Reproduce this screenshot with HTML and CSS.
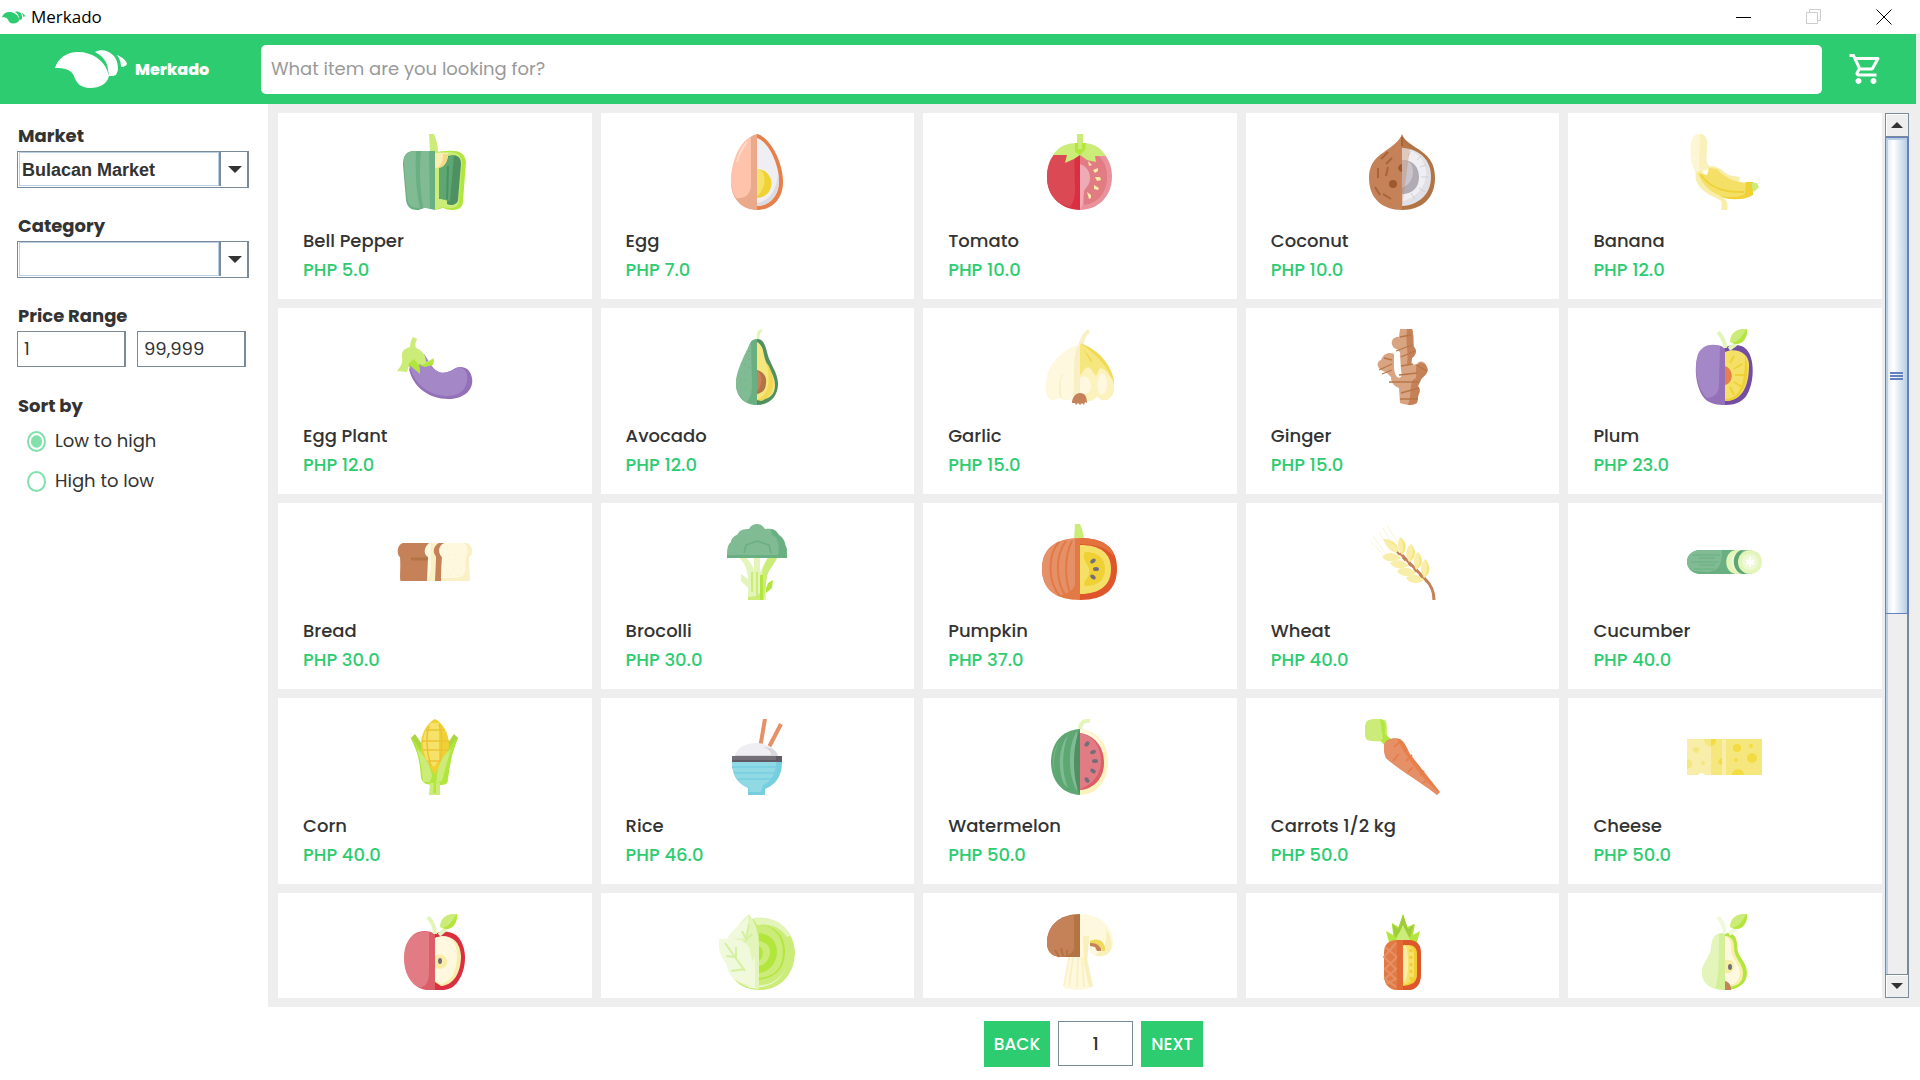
FILE: index.html
```html
<!DOCTYPE html>
<html lang="en">
<head>
<meta charset="utf-8">
<title>Merkado</title>
<link rel="stylesheet" href="styles.css">
</head>
<body>
<svg class="defs" aria-hidden="true">
  <symbol id="bird" viewBox="0 0 72 38">
    <path d="M0 18C3 8 12 2 23 2c14 0 25 8 29 18l2 6c-2 8-9 12-19 12-9 0-14-5-16-12C16 19 9 18 0 18Z"/>
    <path d="M40 2c5-3 13-2 18 3 4 4 5 9 5 15l-2 5c-2 1-4 1-7 1l-1-6C53 13 48 6 40 2Z"/>
    <path d="M62 5c5 2 9 5 10 9-1 2-3 3-6 3 0-4-1-8-4-12Z"/>
  </symbol>
</svg>

<div class="titlebar">
  <svg class="titlebar-icon"><use href="#bird"/></svg>
  <span class="titlebar-name">Merkado</span>
  <button class="win-btn" aria-label="Minimize"><svg viewBox="0 0 16 16"><path d="M0 8.5h15"/></svg></button>
  <button class="win-btn win-btn-off" aria-label="Restore" disabled><svg viewBox="0 0 16 16"><path d="M.5 3.500h11v11H.5zM3.500 3V.5h11v11H12"/></svg></button>
  <button class="win-btn" aria-label="Close"><svg viewBox="0 0 16 16"><path d="M.5.5l15 15M15.500.5l-15 15"/></svg></button>
</div>

<header class="header">
  <a class="brand" href="#"><svg class="brand-logo"><use href="#bird"/></svg><span>Merkado</span></a>
  <input class="search" type="text" placeholder="What item are you looking for?" aria-label="Search items">
  <button class="cart" aria-label="Cart"><svg viewBox="0 0 24 24"><path d="M15.550 13c.75 0 1.410-.41 1.750-1.030l3.580-6.490A.996.996 0 0 0 20.010 4H5.210l-.94-2H1v2h2l3.600 7.590-1.350 2.440C4.520 15.370 5.480 17 7 17h12v-2H7l1.100-2h7.450zM6.160 6h12.150l-2.760 5H8.530L6.160 6zM7 18c-1.100 0-1.990.9-1.990 2S5.900 22 7 22s2-.9 2-2-.9-2-2-2zm10 0c-1.100 0-1.990.9-1.990 2s.89 2 1.990 2 2-.9 2-2-.9-2-2-2z"/></svg></button>
</header>

<div class="layout">
  <aside class="sidebar">
    <div class="field">
      <label for="market">Market</label>
      <div class="combo"><select id="market"><option>Bulacan Market</option></select></div>
    </div>
    <div class="field">
      <label for="category">Category</label>
      <div class="combo"><select id="category"><option></option></select></div>
    </div>
    <fieldset class="field">
      <legend>Price Range</legend>
      <div class="range">
        <input type="text" value="1" aria-label="Lowest price">
        <input type="text" value="99,999" aria-label="Highest price">
      </div>
    </fieldset>
    <fieldset class="field">
      <legend>Sort by</legend>
      <label class="radio"><input type="radio" name="sort" checked>Low to high</label>
      <label class="radio"><input type="radio" name="sort">High to low</label>
    </fieldset>
  </aside>

  <main class="main">
    <div class="viewport">
      <section class="products">
        <article class="card">
          <svg viewBox="0 0 76 76">
            <path fill="#cbec78" d="M32 0h5c2 5 4 11 4 18h-8Z"/>
            <path fill="#b2e63c" d="M38 18c4 0 6-1 12-1 10-1 18 1 19 11l-3 39c0 6-4 9-10 9-5 0-7-1-10-2l-8 2Z"/>
            <path fill="#cbec78" d="M38 18h12c9 0 14 2 15 10l-3 38c0 5-3 8-8 8-6 0-10-2-16 2Z"/>
            <path fill="#4f9062" d="M51 22c8-2 13 0 13 8l-3 36c-1 5-7 6-11 4Z"/>
            <path fill="#5da772" d="M42 33c4-2 6-11 15-12l-4 46c-4 0-6-2-11-2Z"/>
            <path fill="#4f9062" d="M50 32h2l-1 34-2-1Z"/>
            <path fill="#f8efb0" d="M38 19h13c0 8-4 15-13 15Z"/><path fill="#f5da86" d="M46 20h5c0 8-4 14-10 14 4-4 5-8 5-14Z"/>
            <path fill="#69af81" d="M17 17c-8 0-11 5-11 14l3 35c1 7 5 10 11 10 4 0 5-2 9-2l9 2V17Z"/>
            <path fill="#80bb93" d="M17 17c-7 0-11 5-10 14l3 33c1 7 4 10 13 10-4-18-5-38-4-57ZM24 17h8l1 57h-7c-3-20-4-38-2-57Z"/>
          </svg>
          <h2>Bell Pepper</h2><p>PHP 5.0</p>
        </article>
        <article class="card">
          <svg viewBox="0 0 76 76">
            <path fill="#e77f4b" d="M38 0c13 3 26 28 26 48 0 18-12 28-26 28Z"/>
            <path fill="#efeff3" d="M38 4c12 4 22 26 22 44 0 14-10 24-22 24Z"/>
            <path fill="#dcdbe2" d="M59 38c4 20-6 34-21 34v-3c12-2 20-12 21-31Z"/>
            <path fill="#f0d234" d="M38 35a14 14 0 0 1 0 29Z"/><path fill="#f6e169" d="M38 35c10 0 10 20 0 27Z"/>
            <path fill="#eaa98a" d="M38 0C24 3 12 28 12 48c0 18 12 28 26 28Z"/>
            <path fill="#ffc2ab" d="M32 3C20 8 12 29 12 46c0 8 2 13 5 18 9 1 15-4 15-13Z"/>
            <path fill="none" stroke="#ffd8c9" stroke-width="2" d="M18 28c2-8 5-14 10-20"/>
          </svg>
          <h2>Egg</h2><p>PHP 7.0</p>
        </article>
        <article class="card">
          <svg viewBox="0 0 76 76">
            <path fill="#e9929b" d="M38 12c20-2 32 12 32 31S56 76 38 76Z"/>
            <path fill="#e27c84" d="M38 16c17 0 27 10 27 27S55 69 42 71l-4-28Z"/>
            <path fill="#eeaab5" d="M38 30c6 2 10 7 10 14 0 8-5 9-6 14l-1 12-3 6Z"/>
            <path fill="#f9eda5" d="M46 27l4 4-3 1zM51 36l5-2v3l-3 2zM53 43h5l1 3-4 1zM52 51l5 3-1 2-4-1zM45 58l4 3v3l-2 1z"/>
            <path fill="#d92f40" d="M38 12C18 10 5 24 5 43s14 33 33 33Z"/>
            <path fill="#db4a54" d="M32 12C14 12 5 25 5 43c0 17 9 27 23 30 4-5 5-11 5-17Z"/>
            <path fill="#cbec78" d="M11 21C16 13 24 9 35 9V0h6v9c11 0 18 5 23 13h-11l1 6-9-2-7-5-6 4-9 4 2-8Z"/>
            <path fill="#b2e63c" d="M33 9h3v6h4V9h4l-1 7-5 5-5-3Z"/>
          </svg>
          <h2>Tomato</h2><p>PHP 10.0</p>
        </article>
        <article class="card">
          <svg viewBox="0 0 76 76">
            <path fill="#b37444" d="M37 0c2 7 12 12 19 17 10 7 14 15 14 27 0 20-13 32-33 32Z"/>
            <path fill="#e1e0e6" d="M37 14c18 1 29 12 29 29S54 71 37 72Z"/>
            <path fill="#efeff3" d="M37 14c14 2 24 12 24 26 0 13-11 25-24 27Z"/>
            <path fill="#b0abb4" d="M37 26c11 0 17 7 17 17s-6 17-17 17Z"/><path fill="#c9c5cc" d="M37 26c8 0 11 5 11 12s-4 13-11 16Z"/>
            <path stroke="#d1cfd7" stroke-width="1" d="M43 22l3-5M52 26l4-4M55 33l6-2M56 43h7M54 54l6 4M46 59l4 6"/>
            <path fill="#c58158" d="M37 0c-2 7-11 13-18 18C8 25 4 33 4 44c0 20 13 32 33 32Z"/>
            <path fill="#c58158" d="M37 4l8 10-8 60Z" opacity=".35"/>
            <path fill="none" stroke="#a5653a" stroke-width="2" d="M16 25l7-7M21 30l6-6M13 44V34M21 42l2-9M10 53l5 8M18 60l8 5M37 12V3"/>
            <circle cx="28" cy="50" r="4" fill="#9b592d"/><path fill="#9b592d" d="M37 30v8c-5-1-5-7 0-8Z"/>
          </svg>
          <h2>Coconut</h2><p>PHP 10.0</p>
        </article>
        <article class="card">
          <svg viewBox="0 0 76 76">
            <path fill="#fdf6d5" d="M9 40C2 28 1 3 10 0c8-1 11 7 10 15l-1 13 5 7Z"/>
            <path fill="#f9f0bb" d="M13 0c7 0 8 7 7 17-1 8-1 12 3 16l-9 4c-4-8-1-19-1-37Z"/>
            <path fill="#f8eeaa" d="M20 33c7-2 13 1 17 5 5 4 10 4 16 5l-1 7H37ZM9 38c-3 12 8 21 22 27 5 2 4 6 3 11h6c2-7-1-10-5-14L14 36Z"/>
            <path fill="#f5e067" d="M11 39c5 15 20 26 39 26 9 0 15-3 16-6l1-11c-13 2-26-1-37-13l-8-1-2 7Z"/>
            <path fill="#efd136" d="M59 48h7v13c-11 6-25 5-34 1 12 2 21 1 26-2ZM14 40c10 13 23 18 43 17v2C37 60 22 54 13 41Z"/>
            <path fill="#cbec78" d="M65 49h5l2 4-5 5-2-4Z"/>
          </svg>
          <h2>Banana</h2><p>PHP 12.0</p>
        </article>

        <article class="card">
          <svg viewBox="0 0 76 76">
            <path fill="#9470b8" d="M12 40c4 18 20 30 39 30 16 0 26-9 24-21-2-11-11-13-18-9-10 6-17 5-23-4l-7-11Z"/>
            <path fill="#a487c7" d="M12 36c4 16 17 31 39 31 12 0 18-7 19-15s-1-12-8-14l-5 2c-9 6-17 5-23-4l-7-10Z"/>
            <path fill="#cbec78" d="M16 8l4 2c-2 4-2 6-1 9 6 2 10 7 10 14l8-4-1 5-8 3-6-2 1 9-7-6-3-4-3 9-10-1 3-4c3-4 2-8 2-12 0-5 4-7 8-8 0-4 1-7 3-10Z"/>
            <path fill="#b2e63c" d="M17 30c3 5 7 8 12 4l8-4-1 6-8 2-6-2 1 9-7-6-5-4Z"/>
          </svg>
          <h2>Egg Plant</h2><p>PHP 12.0</p>
        </article>
        <article class="card">
          <svg viewBox="0 0 76 76">
            <path fill="none" stroke="#e3f5ba" stroke-width="3" d="M43 1c-4 2-4 4-4 9"/>
            <path fill="#4f9062" d="M38 10c6 0 8 5 10 13 2 11 11 20 11 32 0 13-9 21-21 21Z"/>
            <path fill="#f6e67e" d="M38 13c4 2 6 6 7 13 2 12 11 19 11 30s-7 15-18 15Z"/>
            <path fill="#f1d957" d="M48 34c8 12 11 32-6 38l-4-1c10-5 14-14 10-37Z"/>
            <path fill="#b37444" d="M38 41c7 2 10 7 9 13 0 7-4 10-9 11Z"/><path fill="#c58158" d="M38 41c6 4 6 14 0 22Z"/>
            <path fill="#69af81" d="M38 10c-7 0-7 5-10 13-3 12-11 20-11 32 0 13 9 21 21 21Z"/>
            <path fill="#80bb93" d="M32 13c-4 8-15 28-15 41 0 10 4 15 11 19 4-5 5-10 5-18Z"/>
            <path stroke="#69af81" stroke-width="1" stroke-dasharray="1 7" d="M22 50v20M26 35v30M30 22v18"/>
          </svg>
          <h2>Avocado</h2><p>PHP 12.0</p>
        </article>
        <article class="card">
          <svg viewBox="0 0 76 76">
            <path fill="#f9f1c5" d="M46 0l2 3c-5 5-6 9-6 14l-8 5c3-6 4-17 12-22Z"/>
            <path fill="#fef8df" d="M38 15C17 22 4 38 4 56c-1 14 5 18 13 13 8 4 12 3 16-2l5-3Z"/>
            <path fill="#f8efc5" d="M38 15c-6 7-6 14-6 45l-1 7h7ZM21 45c-3 7-3 17-1 24h-2c-2-8-1-18 2-24Z"/>
            <path fill="#f6e67e" d="M38 15c18 5 30 20 34 36v10L38 54Z"/>
            <path fill="#f1d957" d="M38 14c20 7 30 22 34 37l-3-3C63 34 55 27 38 14ZM41 19l9 12-1 3Z"/>
            <path fill="#fbf2bd" d="M38 47c5-9 9-12 12-5l4 5 4-8c6 1 10 7 12 12 5 7 1 18-5 20-6 1-8-1-9-4-6 7-13 6-18 2Z"/>
            <path fill="#fef8e0" d="M38 49c6-4 10 0 11 8 0 6-4 9-11 9ZM59 44c8 2 8 19 1 22-5-1-6-14-1-22Z"/>
            <path fill="#c58158" d="M30 74c0-6 4-10 8-10 5 0 7 4 7 10l-2-1-1 3-2-2-2 2-2-2-2 2-1-2Z"/>
          </svg>
          <h2>Garlic</h2><p>PHP 15.0</p>
        </article>
        <article class="card">
          <svg viewBox="0 0 76 76">
            <path fill="#d9a482" d="M35 0h12c3 8 0 14 2 18 4 4 1 9-2 11l-1 7 6-1c2-5 9-2 9 2 5 5-1 10-5 13l-3 7c4 5 0 7 0 12l-1 5c-5 3-12 2-17 0l-1-15c-5-2-8-5-8-11l-5-5c-9-2-11-10-5-12 3-7 8-8 13-6v9c0 5 0 10 3 14 3 2 6 0 4-7l-1-15c1-3-2-6-6-7-5-6-1-12 5-11Z"/>
            <path fill="#c58158" d="M42 0h5c2 7 1 13 2 18 4 4 1 9-2 11l-1 7-4-1c2-13-2-20 0-35ZM55 34c9 0 10 9 2 15l-4 8c4 6 0 7 0 12l-1 5c-4 2-7 2-9 2 5-12 0-24 8-27 1-5-1-8 1-13Z"/>
            <path fill="none" stroke="#b87546" stroke-width="1.300" d="M35 8l11-2M31 22l16-6M36 28l14-6M36 37l12-2M14 41l13-6M17 45l10-4M24 53h30M34 46l18-2M51 36l11 6M36 64l18-5M35 70h18M19 29l8 2"/>
          </svg>
          <h2>Ginger</h2><p>PHP 15.0</p>
        </article>
        <article class="card">
          <svg viewBox="0 0 76 76">
            <path fill="#734da1" d="M38 19c7-5 17-3 21 1 11 10 8 45-5 52-5 3-10 4-16 4Z"/>
            <path fill="#f5e067" d="M38 23c11-5 24 1 24 13 0 18-5 36-24 36Z"/>
            <path fill="#efd136" d="M58 26c7 17 0 47-20 46v-2c17 0 20-20 20-44Z"/>
            <path stroke="#efd136" stroke-width="2" d="M43 34l4-7M47 40l8-5M48 46h9M47 53l8 5M43 58l4 8"/>
            <path fill="#e77f4b" d="M38 37c9 3 9 17 0 19Z"/>
            <path fill="#9470b8" d="M38 19c-7-5-17-3-21 0C5 27 7 58 18 70c5 5 13 6 20 6Z"/>
            <path fill="#a487c7" d="M33 17c-10-3-18 0-22 8-4 11-2 34 9 44 9-1 12-6 12-14Z"/>
            <path fill="none" stroke="#e3f5ba" stroke-width="4" d="M31 3c4 5 7 9 7 16M49 15l-7 5"/>
            <path fill="#cbec78" d="M43 13C43 4 50-1 60 0c1 9-7 18-17 13Z"/><path fill="#b2e63c" d="M60 0c1 10-6 18-15 14C54 12 55 6 60 0Z"/>
          </svg>
          <h2>Plum</h2><p>PHP 23.0</p>
        </article>

        <article class="card">
          <svg viewBox="0 0 76 76">
            <path fill="#c58158" d="M6 19h37l3 14-1 24H4c-2 0 0-12-1-24C0 32-1 21 6 19Z"/>
            <path stroke="#b37444" stroke-width="3" d="M14 35h17"/>
            <path fill="#fef8df" d="M32 19h8l-2 4c-4 4 0 7 0 10l-1 24h-7l1-24c-5-3-4-10 1-14Z"/><path fill="#f9f1c5" d="M38 19h4l-4 6c-3 4 2 6 1 10l-1 22h-7l3-11V20Z"/>
            <path fill="#c58158" d="M42 19h5l-2 38h-6l1-24c-5-4-4-11 2-14Z"/>
            <path fill="#f9f1c5" d="M48 19h21c7 1 8 12 3 14l1 24H44l1-24c-4-4-4-12 3-14Z"/>
            <path fill="#fef8df" d="M48 19h18c5 1 5 10 3 14v12c-1 6-5 9-11 9H44l1-21c-4-4-4-12 3-14Z"/>
            <path stroke="#f9f1c5" stroke-width="1" stroke-dasharray="1 6" d="M49 45h18M51 31h15M53 51h12"/>
          </svg>
          <h2>Bread</h2><p>PHP 30.0</p>
        </article>
        <article class="card">
          <svg viewBox="0 0 76 76">
            <path fill="#e3f5ba" d="M18 32h8c4 4 7 9 9 14V32h6v16c3-6 6-12 10-16h4L47 53v23H29V64l-7-7v-7l7 5c0-9-4-18-11-23Z"/>
            <path fill="#cbec78" d="M50 32h9c-3 8-9 13-11 20l-3 24H29v-3l8-1V48h2v23l4-4c-2-13 0-25 7-35Z"/>
            <path fill="#b2e63c" d="M41 51h3v25h-3ZM47 64l2-5 5-3-1 8-6 5Z"/>
            <path stroke="#cbec78" stroke-width="2" d="M33 48v20"/>
            <path fill="#80bb93" d="M8 33c0-6 0-12 4-15 0-4 4-6 7-8 1-4 6-5 11-5 3-6 12-7 16 0 5-1 11 0 13 5 5 3 7 7 7 11 3 3 2 8 2 13Z"/>
            <path fill="#69af81" d="M52 5c5 1 7 4 8 7 5 3 6 7 7 11l1 11H8v-3h51c2-9 0-13-2-18-4-1-5-4-5-8Z"/>
            <path fill="none" stroke="#69af81" stroke-width="1.500" d="M25 29l2-8 11-4 12 4 2 8"/>
          </svg>
          <h2>Brocolli</h2><p>PHP 30.0</p>
        </article>
        <article class="card">
          <svg viewBox="0 0 76 76">
            <path fill="#cbec78" d="M33 0h5c2 5 4 10 4 16H32Z"/>
            <path fill="#df552c" d="M38 14c26 0 37 11 37 31S63 76 38 76Z"/><path fill="#e2733d" d="M38 14c23 0 32 9 34 19-7-10-18-12-34-13Z"/>
            <path fill="#f5e067" d="M38 21c20 0 31 8 31 24S58 70 38 70Z"/>
            <path fill="#efd136" d="M43 28c13 0 20 6 20 17s-7 17-20 17c-3-6 6-8 4-17-1-5-8-10-4-17Z"/>
            <g fill="#746e79"><ellipse cx="51" cy="37" rx="3" ry="2" transform="rotate(-40 51 37)"/><ellipse cx="54" cy="45" rx="3" ry="2"/><ellipse cx="51" cy="53" rx="3" ry="2" transform="rotate(40 51 53)"/></g>
            <path fill="#e27a45" d="M38 14C13 14 0 25 0 45s13 31 38 31Z"/>
            <path fill="#e69068" d="M27 15C9 19 0 27 0 45c0 13 6 22 16 27 8-2 16-5 17-12V15Z"/>
            <path fill="none" stroke="#e27a45" stroke-width="2" d="M17 18C6 30 5 57 18 72M24 17c-11 14-11 41 1 57M30 17c-8 15-8 43 1 58"/>
          </svg>
          <h2>Pumpkin</h2><p>PHP 37.0</p>
        </article>
        <article class="card">
          <svg viewBox="0 0 76 76">
            <path stroke="#fdf5d2" stroke-width="1" d="M22 1l16 27M18 4l16 28M14 8l16 27M8 12l18 25M6 18l18 19"/>
            <path fill="none" stroke="#c58158" stroke-width="3" d="M69 76c0-9-3-15-8-20L35 29"/>
            <path fill="#f8eeaa" d="M34 30c-8-2-13-7-16-15 10-1 17 6 16 15ZM37 31c-5-7-5-13-2-18 6 4 8 12 2 18ZM44 38c-4-7-4-14 2-18 6 7 5 14-2 18ZM51 46c-3-7-3-14 2-18 6 7 5 14-2 18ZM59 54c-4-7-4-13 1-19 6 7 6 14-1 19ZM36 34c-9 5-15 4-19-1 5-6 13-5 19 1ZM44 42c-9 4-15 3-19-3 6-5 14-3 19 3ZM51 49c-8 5-15 4-19-2 6-5 13-4 19 2ZM59 56c-7 5-14 4-18-2 6-5 13-4 18 2Z"/>
            <path fill="#f6e67e" d="M37 31c2-7 1-13-2-18 6 4 8 12 2 18ZM44 38c4-6 5-12 2-18 6 7 5 14-2 18ZM51 46c4-6 5-12 2-18 6 7 5 14-2 18ZM59 54c4-6 4-13 1-19 6 7 6 14-1 19ZM34 30c0-8-6-11-12-13 7 0 12 6 12 13Z"/>
            <path stroke="#c58158" stroke-width="2" stroke-dasharray="4 4" d="M32 28l30 30"/>
          </svg>
          <h2>Wheat</h2><p>PHP 40.0</p>
        </article>
        <article class="card">
          <svg viewBox="0 0 76 76">
            <path fill="#69af81" d="M12 26h36v24H12C-4 48-4 28 12 26Z"/><path fill="#80bb93" d="M12 26h23c0 16-4 22-16 22L8 47C-4 44-3 28 12 26Z"/>
            <path stroke="#69af81" stroke-width="1" d="M5 31h28M4 38h28M7 45h20M12 34h16M12 41h16"/>
            <path fill="#e3f5ba" d="M49 26h9l-4 24h-5c-13-1-13-23 0-24Z"/><path fill="#f1f9dc" d="M50 29c-7 2-7 16 0 18l4-4V30Z"/>
            <path fill="#5da772" d="M55 26h10v24H55c-11-3-11-22 0-24Z"/><path fill="#80bb93" d="M56 26h7v3h-9Z"/>
            <circle cx="63" cy="38" r="12" fill="#e3f5ba"/><circle cx="63" cy="38" r="8" fill="#eff8d6"/>
            <path stroke="#fff" stroke-width="2" d="M63 33v10M59 36l8 4M67 36l-8 4"/>
          </svg>
          <h2>Cucumber</h2><p>PHP 40.0</p>
        </article>

        <article class="card">
          <svg viewBox="0 0 76 76">
            <path fill="#aad640" d="M14 19l4-4 9 13-5 10ZM61 19l-4-4-9 13 6 10Z"/>
            <path fill="#efd136" d="M38 0c8 4 14 15 14 25 0 17-8 27-14 34-6-8-14-17-14-34C24 15 30 4 38 0Z"/>
            <path fill="#f6e169" d="M34 4h8v37l-5 7-8-8c-5-14-4-26 5-36Z"/>
            <path fill="none" stroke="#ecc233" stroke-width="1.500" d="M29 11h18M25 22h27M26 31h25M31 42h14M32 7c-3 9-3 25 2 40M42 5c4 9 3 25 1 42"/>
            <path fill="#b2e63c" d="M13 18c5 4 11 12 15 21l10 17 8-15 8-15 7-8c-5 8-9 34-10 43-1 5-3 5-13 5s-12-2-14-7C23 43 20 28 13 18Z"/>
            <path fill="#cbec78" d="M20 30c8 7 13 16 15 27l-2 6h-7c-1-15-3-23-6-33ZM54 30c-9 7-13 16-14 27l-1 7c5 0 7-3 8-10ZM34 64h9v12H32l1-12Z"/><path fill="#b2e63c" d="M37 64h2v10h-3Z"/>
          </svg>
          <h2>Corn</h2><p>PHP 40.0</p>
        </article>
        <article class="card">
          <svg viewBox="0 0 76 76">
            <path fill="none" stroke="#e69068" stroke-width="4" d="M46 0l-5 29M62 5L48 32"/>
            <path fill="#efeff3" d="M16 38c1-18 40-19 43 0Z"/><path fill="#d8d7de" d="M44 28c9 0 14 4 15 9H16v-1h36c0-4-3-6-8-8Z"/>
            <path fill="#746e79" d="M13 37h50v6H13Z"/><path fill="#5f5a64" d="M57 37h6v6H13v-2h44Z"/>
            <path fill="#76cfde" d="M13 43h50c0 13-5 22-17 27v6H29v-7c-11-5-16-13-16-26Z"/>
            <path fill="#92d9e6" d="M13 43h44c0 13-6 20-13 23l-2 7H30v-4c-11-5-17-13-17-26Z"/>
            <path stroke="#76cfde" stroke-width="1.500" d="M13 48h44M15 54h41M19 60h34"/>
          </svg>
          <h2>Rice</h2><p>PHP 46.0</p>
        </article>
        <article class="card">
          <svg viewBox="0 0 76 76">
            <path fill="none" stroke="#e3f5ba" stroke-width="4" d="M48 2c-6-1-10 2-10 9"/>
            <path fill="#fbf2bd" d="M38 10c17 2 28 14 28 33S54 76 38 76Z"/>
            <path fill="#fef8df" d="M38 10c13 3 22 10 24 25-6-11-13-20-24-21Z"/>
            <path fill="#db5d68" d="M38 14c14 2 24 13 24 30 0 15-10 26-24 27Z"/><path fill="#e27c84" d="M38 14c14 3 21 14 21 28S50 66 38 70Z"/>
            <g fill="#746e79"><ellipse cx="45" cy="25" rx="3" ry="2" transform="rotate(-50 45 25)"/><ellipse cx="51" cy="33" rx="3" ry="2" transform="rotate(-25 51 33)"/><ellipse cx="53" cy="42" rx="3" ry="2"/><ellipse cx="51" cy="52" rx="3" ry="2" transform="rotate(30 51 52)"/><ellipse cx="45" cy="61" rx="3" ry="2" transform="rotate(55 45 61)"/></g>
            <path fill="#5da772" d="M38 10C20 11 9 24 9 43s11 32 29 33Z"/>
            <path fill="#80bb93" d="M26 16c-9 11-11 34-4 49l4 4c-7-16-6-38 0-53ZM35 12c-10 16-9 44 0 60V12ZM18 22c-6 8-7 23-5 32-3-11-2-24 5-32Z"/>
            <path fill="#4f9062" d="M38 10c-5 11-6 23-6 33s1 22 6 33Z"/>
          </svg>
          <h2>Watermelon</h2><p>PHP 50.0</p>
        </article>
        <article class="card">
          <svg viewBox="0 0 76 76">
            <path fill="#cbec78" d="M2 2C6-1 15 0 20 1c3 3 1 12 3 18l-3 4C13 22 4 23 1 20-1 15-1 6 2 2Z"/><path fill="#b2e63c" d="M15 0c6 1 6 7 5 15l6 5-6 7-4-5 2-3Z"/>
            <path fill="#e77f4b" d="M19 26c1-5 9-8 16-6 5 3 7 9 10 15l30 38-3 3C60 66 30 48 21 39c-2-4-2-9-2-13Z"/>
            <path fill="#e69068" d="M19 26c2-4 7-7 13-6 10 19 24 38 41 53l-1 2C60 66 30 48 21 39c-2-4-2-9-2-13Z"/>
            <path stroke="#e77f4b" stroke-width="2" d="M29 28l7-6M28 42l6-7M41 42l6-6M43 53l5-5M55 56l4-4M58 64l3-2"/>
          </svg>
          <h2>Carrots 1/2 kg</h2><p>PHP 50.0</p>
        </article>
        <article class="card">
          <svg viewBox="0 0 76 76">
            <path fill="#f8eeaa" d="M0 20h39v36H18a4 4 0 0 0-7 0H0Z"/><path fill="#f6e67e" d="M24 20h11v36H24ZM39 20h36v36H39Z"/>
            <path fill="#f6e67e" d="M17 20h7v8c-4-1-7-4-7-8ZM0 40c7 1 7 9 0 10Z"/><circle cx="9" cy="31" r="3" fill="#f6e67e"/><circle cx="16" cy="44" r="2" fill="#f6e67e"/>
            <path fill="#f3dc42" d="M24 20h5c0 4-2 7-5 7ZM35 39v7c-5-1-5-6 0-7ZM45 56a6 6 0 0 1 12 0Z"/>
            <g fill="#f3dc42"><circle cx="50" cy="29" r="4"/><circle cx="64" cy="27" r="2"/><circle cx="65" cy="39" r="5"/><circle cx="49" cy="41" r="2"/></g>
          </svg>
          <h2>Cheese</h2><p>PHP 50.0</p>
        </article>

        <article class="card">
          <svg viewBox="0 0 76 76">
            <path fill="#d92f40" d="M38 20c6-4 15-3 21 1 12 10 12 35 0 49-4 5-11 7-21 6Z"/>
            <path fill="#f8eeaa" d="M38 24c12-5 25 0 26 18 0 16-7 29-20 30l-6-4Z"/><path fill="#fef8df" d="M38 24c11-5 22 0 22 17 0 16-6 28-17 29l-5-4Z"/>
            <path fill="#f9eda5" d="M38 42c6-4 12 0 12 6s-7 9-12 5Z"/><ellipse cx="43" cy="47" rx="2" ry="3" fill="#746e79"/>
            <path fill="#db5d68" d="M38 20c-6-4-16-4-22 1-12 12-11 36 1 49 5 5 11 7 21 6Z"/>
            <path fill="#e27c84" d="M32 18C15 16 7 28 7 44s7 26 16 30c7-2 9-8 9-15Z"/>
            <path fill="none" stroke="#e3f5ba" stroke-width="4" d="M31 3c4 5 7 9 7 17M49 15l-7 6"/>
            <path fill="#cbec78" d="M43 13C43 4 50-1 60 0c1 9-7 18-17 13Z"/><path fill="#b2e63c" d="M60 0c1 10-6 18-15 14C54 12 55 6 60 0Z"/>
          </svg>
        </article>
        <article class="card">
          <svg viewBox="0 0 76 76">
            <path fill="#cbec78" d="M33 5c22-5 42 9 43 34-1 24-17 37-35 37-15 0-23-6-28-14Z"/>
            <path fill="#e3f5ba" d="M34 4c15-2 30 3 38 18l-4 1C60 12 50 9 38 11ZM70 40c0 16-12 31-29 31l-6 3c22 0 34-15 35-34Z"/>
            <path fill="#b2e63c" d="M40 11c18 1 26 12 26 27S57 64 40 66Z"/><path fill="#cbec78" d="M40 11c16 1 24 12 24 27S56 63 40 64Z"/>
            <path fill="#b2e63c" d="M40 19c12 1 18 9 18 19s-7 20-18 21Z"/><path fill="#cbec78" d="M40 27c7 1 11 5 11 11s-4 13-11 14Z"/><path fill="#b2e63c" d="M40 32c5 2 5 12 0 15Z"/>
            <path fill="#e3f5ba" d="M30 0c5 7 10 15 10 38v37c-20-1-32-15-32-30C8 29 16 12 30 0Z"/>
            <path fill="#f1f9dc" d="M0 25c15-2 30 1 31 13l3 12-4 21C18 69 8 62 8 51 1 43-1 35 0 25ZM29 2c-3 6-16 12-21 23l16-1 5-9ZM36 42v32h-6c0-14 2-24 6-32Z"/>
            <path fill="none" stroke="#d5f0a0" stroke-width="2" d="M6 29l20 28M7 42l9 1M17 33v12M12 57l14-2M30 10l-3 16 6-6M23 17l4 8"/>
          </svg>
        </article>
        <article class="card">
          <svg viewBox="0 0 76 76">
            <path fill="#f9f1c5" d="M27 40h17l7 32c-7 5-22 5-30 0Z"/><path fill="#fef8df" d="M38 0c20 0 33 12 33 28 0 12-8 14-16 14-8-1-8-8-9-18l-2 3-1 23 5 24c-8 3-19 2-26 0l7-34h9Z"/>
            <path fill="#f8f0bb" d="M64 14c11 18 5 30-9 28l-2-2c10-2 13-15 11-26ZM41 22h6v2l-2 26 5 23h-3l-5-24Z"/>
            <path stroke="#f9f1c5" stroke-width="2" d="M31 44l-4 28M36 44l-1 29M40 44l2 29"/>
            <path fill="#f0d95a" d="M48 27c8-4 16 0 15 10h-3l-2-5-10-2Z"/><path fill="#c58158" d="M48 29c9 0 12 5 11 8h-4l-2-4-5-1Z"/>
            <path fill="#b37444" d="M38 0C17 0 5 12 5 29c0 11 7 14 16 14h17Z"/><path fill="#c58158" d="M32 1C15 3 5 13 5 29c0 9 5 13 13 14 10-1 15-5 14-12Z"/><path stroke="#b37444" stroke-width="2" d="M13 36l4 7M19 34l2 8M25 36v7"/>
          </svg>
        </article>
        <article class="card">
          <svg viewBox="0 0 76 76">
            <path fill="#b2e63c" d="M21 17l7 4-1-12 7 4 4-13 4 13 8-3-2 11 7-4-4 15H25Z"/><path fill="#9fcc3a" d="M38 0l-5 15-6-5 3 14 8-10 7 10 4-14-6 5Z"/><path fill="#cbec78" d="M38 11l7 15H31Z"/>
            <path fill="#df552c" d="M38 26h6c8 0 12 5 12 13v22c0 8-4 15-12 15h-6Z"/>
            <path fill="#f0ce34" d="M38 31h5c6 0 9 3 9 9v20c0 8-4 11-14 12Z"/><path fill="#f6e169" d="M38 31h4c5 1 7 4 7 9v19c0 7-5 11-11 12Z"/><path fill="#f9eda5" d="M38 32h3c3 12 3 24 0 34l-3 3Z"/>
            <path fill="#e27a45" d="M38 26h-6c-9 0-13 5-13 13v22c0 8 4 15 13 15h6Z"/>
            <path fill="none" stroke="#e69068" stroke-width="2" d="M20 33l12 10-12 12 11 10-10 5M31 29l-12 14 12 12-11 10 11 8"/>
            <path fill="#e2642f" d="M32 26h6v50h-6Z" opacity=".7"/><path stroke="#f0ce34" stroke-width="3" stroke-dasharray="3 4" d="M46 35v33"/>
          </svg>
        </article>
        <article class="card">
          <svg viewBox="0 0 76 76">
            <path fill="#b2e63c" d="M38 19c8-1 12 4 12 12 0 13 10 16 10 28 0 10-8 17-22 17Z"/>
            <path fill="#f8eeaa" d="M38 22c6 0 9 4 9 11 0 12 9 16 9 26s-6 14-18 14Z"/><path fill="#fef8df" d="M38 22c4 1 6 4 6 11 0 12 9 17 9 26s-6 12-15 14Z"/>
            <path fill="#f9eda5" d="M38 46c6-1 10 2 9 7s-5 7-9 6Z"/><ellipse cx="43" cy="53" rx="2" ry="3" fill="#746e79"/><path fill="#c58158" d="M38 67c4 1 6 4 6 9h-6Z"/>
            <path fill="#d3f099" d="M38 19c-9-1-13 5-13 12-1 13-10 17-10 28 0 10 9 17 23 17Z"/><path fill="#e3f5ba" d="M32 19c-9 4-7 13-9 20-4 8-8 12-8 20s6 14 13 16c3-8 4-20 4-56Z"/>
            <path fill="none" stroke="#f1f9dc" stroke-width="4" d="M31 3c4 5 7 9 7 17M49 15l-7 5"/>
            <path fill="#cbec78" d="M43 13C43 4 50-1 60 0c1 9-7 18-17 13Z"/><path fill="#b2e63c" d="M60 0c1 10-6 18-15 14C54 12 55 6 60 0Z"/>
          </svg>
        </article>
      </section>
      <div class="scrollbar">
        <button class="scroll-btn" aria-label="Scroll up"><svg viewBox="0 0 12 6"><path d="M0 6L6 0l6 6z"/></svg></button>
        <div class="track"><div class="thumb"><i></i><i></i><i></i></div></div>
        <button class="scroll-btn" aria-label="Scroll down"><svg viewBox="0 0 12 6"><path d="M0 0l6 6 6-6z"/></svg></button>
      </div>
    </div>
    <nav class="pager" aria-label="Pages">
      <button class="page-btn">BACK</button>
      <input class="page-no" type="text" value="1" aria-label="Page number">
      <button class="page-btn">NEXT</button>
    </nav>
  </main>
</div>
</body>
</html>
```
FILE: styles.css
```css
* { box-sizing: border-box; }

:root {
  --green: #2ecc71;
  --ink: #333;
  --line: #7a8a99;
  --panel: #eee;
  --focus: #b8cfe5;
}

body {
  margin: 0;
  height: 100vh;
  display: flex;
  flex-direction: column;
  overflow: hidden;
  background: #fff;
  color: var(--ink);
  font-family: Poppins, Inter, sans-serif;
  font-size: 18px;
}

button, input, select { font: inherit; color: inherit; border-radius: 0; margin: 0; }
button { border: 0; padding: 0; background: none; }
.defs { display: none; }

/* Window title bar */
.titlebar {
  height: 34px;
  flex: none;
  display: flex;
  align-items: center;
  padding: 0 13px 0 2px;
  color: #000;
}
.titlebar-icon { width: 23px; height: 13px; fill: var(--green); }
.titlebar-name { flex: 1; padding-left: 6px; font: 17px/24px "Open Sans", sans-serif; }
.win-btn { width: 70px; height: 34px; display: grid; place-items: center; }
.win-btn svg { width: 16px; height: 16px; fill: none; stroke: #000; }
.win-btn-off svg { stroke: #ccc; }
.win-btn:last-child { width: 46px; margin-left: 12px; }

/* Green bar */
.header {
  flex: none;
  height: 70px;
  display: flex;
  align-items: center;
  background: var(--green);
  border-right: 4px solid var(--panel);
}
.brand {
  width: 261px;
  padding-left: 55px;
  display: flex;
  align-items: center;
  gap: 8px;
  color: #fff;
  font-size: 16px;
  font-weight: 800;
  text-decoration: none;
}
.brand-logo { width: 72px; height: 38px; fill: #fff; }
.search {
  flex: 1;
  height: 49px;
  padding: 0 10px 1px;
  border: 0;
  border-radius: 5px;
  background: #fff;
}
.search::placeholder { color: #999; }
.cart { width: 94px; padding-left: 26px; }
.cart svg { display: block; width: 36px; height: 36px; fill: #fff; }

.layout { flex: 1; min-height: 0; display: flex; }

/* Filters */
.sidebar { flex: none; width: 268px; padding: 18px 17px; }
.field { margin: 0 0 24px; padding: 0; border: 0; min-width: 0; }
.field > label, .field > legend {
  display: block;
  padding: 0 0 0 1px;
  height: 29px;
  line-height: 28px;
  font-weight: 700;
}
.combo {
  position: relative;
  width: 232px;
  height: 37px;
  border: 1px solid var(--line);
  border-right-width: 2px;
}
.combo::after {
  content: "";
  position: absolute;
  top: 14px;
  right: 5px;
  border: 7px solid transparent;
  border-top-color: var(--ink);
  border-bottom: 0;
  pointer-events: none;
}
.combo::before {
  content: "";
  position: absolute;
  inset: 0 28px 1px 1px;
  border: 1px solid var(--focus);
  box-shadow: 2px 0 var(--line);
  pointer-events: none;
}
.combo select {
  display: block;
  width: 100%;
  height: 100%;
  padding: 3px 4px 2px;
  border: 0;
  appearance: none;
  background: #fff;
  font: bold 18px "Liberation Sans", Arial, sans-serif;
}
.range { display: flex; gap: 11px; }
.range input {
  width: 109px;
  height: 36px;
  padding: 0 6px 2px;
  border: 1px solid var(--line);
  border-right-width: 2px;
}
.range { padding-bottom: 1px; }
.field > .radio {
  display: flex;
  align-items: center;
  gap: 9px;
  height: 40px;
  padding-left: 10px;
  font-weight: 400;
}
.radio input {
  appearance: none;
  width: 19px;
  height: 21px;
  border: 2px solid #82e0aa;
  border-radius: 50%;
  background: #fff;
}
.radio input:checked { background: radial-gradient(#82e0aa 5px, #fff 6px); }

/* Product grid */
.main { flex: 1; min-width: 0; display: flex; flex-direction: column; }
.viewport {
  flex: 1;
  min-height: 0;
  display: flex;
  gap: 3px;
  padding: 9px 11px 9px 10px;
  background: var(--panel);
}
.products {
  flex: 1;
  display: grid;
  grid-template-columns: repeat(5, 1fr);
  grid-auto-rows: 186px;
  gap: 9px;
  overflow: hidden;
}
.card { padding: 21px 25px 0; background: #fff; }
.card svg { display: block; width: 76px; height: 76px; margin: 0 auto 16px; }
.card h2, .card p { margin: 0; font-size: 18px; line-height: 29px; font-weight: 500; }
.card p { color: var(--green); }

.scrollbar { width: 24px; display: flex; flex-direction: column; }
.scroll-btn {
  flex: none;
  height: 24px;
  display: grid;
  place-items: center;
  border: 1px solid var(--line);
  box-shadow: inset 1px 1px #fff;
}
.scroll-btn svg { width: 12px; height: 6px; fill: var(--ink); }
.track {
  flex: 1;
  border: solid var(--line);
  border-width: 0 2px 0 1px;
  box-shadow: inset 2px 0 var(--focus);
}
.thumb {
  height: 57%;
  margin: 0 -2px 0 -1px;
  display: flex;
  flex-direction: column;
  align-items: center;
  justify-content: center;
  gap: 1px;
  border: 1px solid #6382bf;
  border-right-width: 2px;
  box-shadow: inset 2px 2px var(--focus);
  background: linear-gradient(90deg, #dce7f2, #fff 35%, #b8cfe5);
}
.thumb i { width: 13px; height: 2px; background: #6382bf; }

/* Pager */
.pager {
  flex: none;
  height: 73px;
  display: flex;
  justify-content: center;
  align-items: flex-start;
  gap: 8px;
  padding: 14px 1px 0 0;
}
.page-btn {
  height: 46px;
  padding: 0 10px;
  background: var(--green);
  color: #fff;
  font-size: 17px;
  font-weight: 500;
}
.page-no {
  width: 75px;
  height: 45px;
  border: 1px solid var(--line);
  text-align: center;
  font-weight: 500;
}
```
